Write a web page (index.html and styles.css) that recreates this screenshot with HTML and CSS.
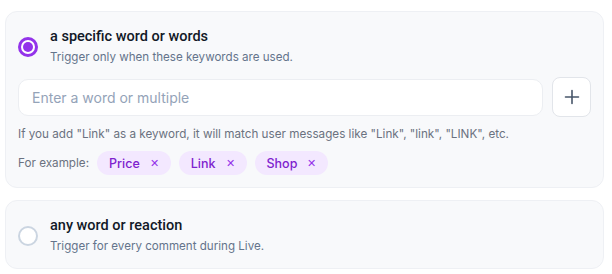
FILE: index.html
```html
<!DOCTYPE html>
<html lang="en">
<head>
  <meta charset="UTF-8" />
  <meta name="viewport" content="width=device-width, initial-scale=1.0"/>
  <title>Keyword Trigger</title>
  <link rel="stylesheet" href="styles.css">
</head>
<body>

  <div class="options">
    <div class="option active">
      <div class="option-head">
        <span class="radio checked"></span>
        <div>
          <div class="option-title">a specific word or words</div>
          <div class="option-sub">Trigger only when these keywords are used.</div>
        </div>
      </div>

      <div class="keyword-row">
        <input type="text" class="keyword-input" placeholder="Enter a word or multiple" />
        <button class="add-btn" type="button">
          <svg width="16" height="16" viewBox="0 0 16 16" fill="none" stroke="#475569" stroke-width="1.6" stroke-linecap="round">
            <path d="M8 1.5v13M1.5 8h13"/>
          </svg>
        </button>
      </div>

      <p class="hint">If you add "Link" as a keyword, it will match user messages like "Link", "link", "LINK", etc.</p>

      <div class="examples">
        <span class="examples-label">For example:</span>
        <span class="chip">Price <span class="chip-x">&#x2715;</span></span>
        <span class="chip">Link <span class="chip-x">&#x2715;</span></span>
        <span class="chip">Shop <span class="chip-x">&#x2715;</span></span>
      </div>
    </div>

    <div class="option">
      <div class="option-head">
        <span class="radio"></span>
        <div>
          <div class="option-title">any word or reaction</div>
          <div class="option-sub">Trigger for every comment during Live.</div>
        </div>
      </div>
    </div>
  </div>

</body>
</html>
```

FILE: styles.css
```css
body {
  margin: 0;
  padding: 11px 8px 0 5px;
  font-family: Inter, "Noto Sans", sans-serif;
  background: #ffffff;
  color: #111827;
}

.options {
  display: flex;
  flex-direction: column;
  gap: 12px;
  width: 599px;
}

.option {
  background: #f8f9fb;
  border: 1px solid #eef0f4;
  border-radius: 12px;
  padding: 14px 12px 12px 12px;
}

.option-head {
  display: flex;
  align-items: center;
  gap: 12px;
}

.radio {
  width: 20px;
  height: 20px;
  border-radius: 50%;
  border: 2px solid #cbd5e1;
  box-sizing: border-box;
  background: #fff;
  flex-shrink: 0;
}

.radio.checked {
  border: 3px solid #9333ea;
  position: relative;
}

.radio.checked::after {
  content: "";
  position: absolute;
  left: 2px;
  top: 2px;
  width: 10px;
  height: 10px;
  border-radius: 50%;
  background: #9333ea;
}

.option-title {
  font-family: Roboto, "Noto Sans", sans-serif;
  font-size: 14.5px;
  font-weight: 500;
  line-height: 21px;
  color: #111827;
}

.option-sub {
  font-size: 11.6px;
  line-height: 20px;
  color: #64748b;
}

.keyword-row {
  display: flex;
  align-items: center;
  gap: 9px;
  margin-top: 10px;
}

.keyword-input {
  flex: 1;
  height: 37px;
  box-sizing: border-box;
  border: 1px solid #eceef2;
  border-radius: 10px;
  background: #fff;
  padding: 0 13px;
  font-family: inherit;
  font-size: 14px;
  color: #111827;
  outline: none;
}

.keyword-input::placeholder {
  color: #94a3b8;
}

.add-btn {
  width: 39px;
  height: 40px;
  border: 1px solid #e2e5ea;
  border-radius: 8px;
  background: #fff;
  display: flex;
  align-items: center;
  justify-content: center;
  padding: 0;
  cursor: pointer;
}

.hint {
  margin: 8px 0 0 0;
  font-size: 11.7px;
  line-height: 18px;
  color: #6b7280;
}

.examples {
  display: flex;
  align-items: center;
  gap: 8px;
  margin-top: 8px;
}

.examples-label {
  font-size: 11.7px;
  color: #6b7280;
}

.chip {
  display: inline-flex;
  align-items: center;
  gap: 10px;
  height: 24px;
  padding: 0 12px;
  border-radius: 12px;
  background: #f3e8ff;
  color: #7e22ce;
  font-size: 12.5px;
  font-weight: 500;
}

.chip-x {
  font-size: 11px;
  color: #9333ea;
}
```
